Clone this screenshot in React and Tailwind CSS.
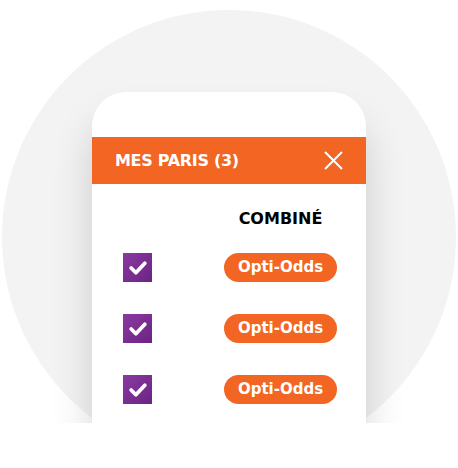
const rows = [0, 1, 2]

function Check() {
  return (
    <div className="flex h-[29px] w-[29px] items-center justify-center bg-gradient-to-br from-[#8b3a9f] to-[#6c2384]">
      <svg width="20" height="20" viewBox="0 0 19 19" fill="none">
        <path
          d="M3 9.5 L7.5 14 L16 5"
          stroke="white"
          strokeWidth="3.6"
          strokeLinecap="round"
          strokeLinejoin="round"
        />
      </svg>
    </div>
  )
}

export default function App() {
  return (
    <div className="h-[468px] w-[458px] overflow-hidden bg-white font-['DejaVu_Sans',sans-serif]">
      {/* the illustration is cut flat at the phone's bottom */}
      <div className="h-[423px] overflow-hidden pl-[2px] pt-[10px]">
        <div className="h-[454px] w-[454px] rounded-full bg-[#f3f3f3] pl-[90px] pt-[82px]">
          <div className="h-[376px] w-[274px] rounded-t-[34px] bg-white pt-[45px] shadow-[0_30px_40px_rgba(0,0,0,0.16)]">
            <div className="flex h-[47px] items-center justify-between bg-[#f26522] pl-[23px] pr-[23px]">
              <span className="text-[16px] font-bold tracking-[-0.3px] text-white">
                MES PARIS (3)
              </span>
              <svg width="19" height="19" viewBox="0 0 19 19" fill="none">
                <path d="M1 1 L18 18 M18 1 L1 18" stroke="white" strokeWidth="2" />
              </svg>
            </div>
            <div className="grid grid-cols-[29px_113px] justify-between pl-[31px] pr-[29px] pt-[23px]">
              <div />
              <div className="text-center text-[16px] font-bold leading-[24px] text-black">
                COMBINÉ
              </div>
            </div>
            <div className="flex flex-col gap-[32px] pl-[31px] pr-[29px] pt-[22px]">
              {rows.map((r) => (
                <div key={r} className="flex items-center justify-between">
                  <Check />
                  <div className="flex h-[29px] w-[113px] items-center justify-center rounded-full bg-[#f26522] text-[15px] font-bold text-white">
                    Opti-Odds
                  </div>
                </div>
              ))}
            </div>
          </div>
        </div>
      </div>
    </div>
  )
}
